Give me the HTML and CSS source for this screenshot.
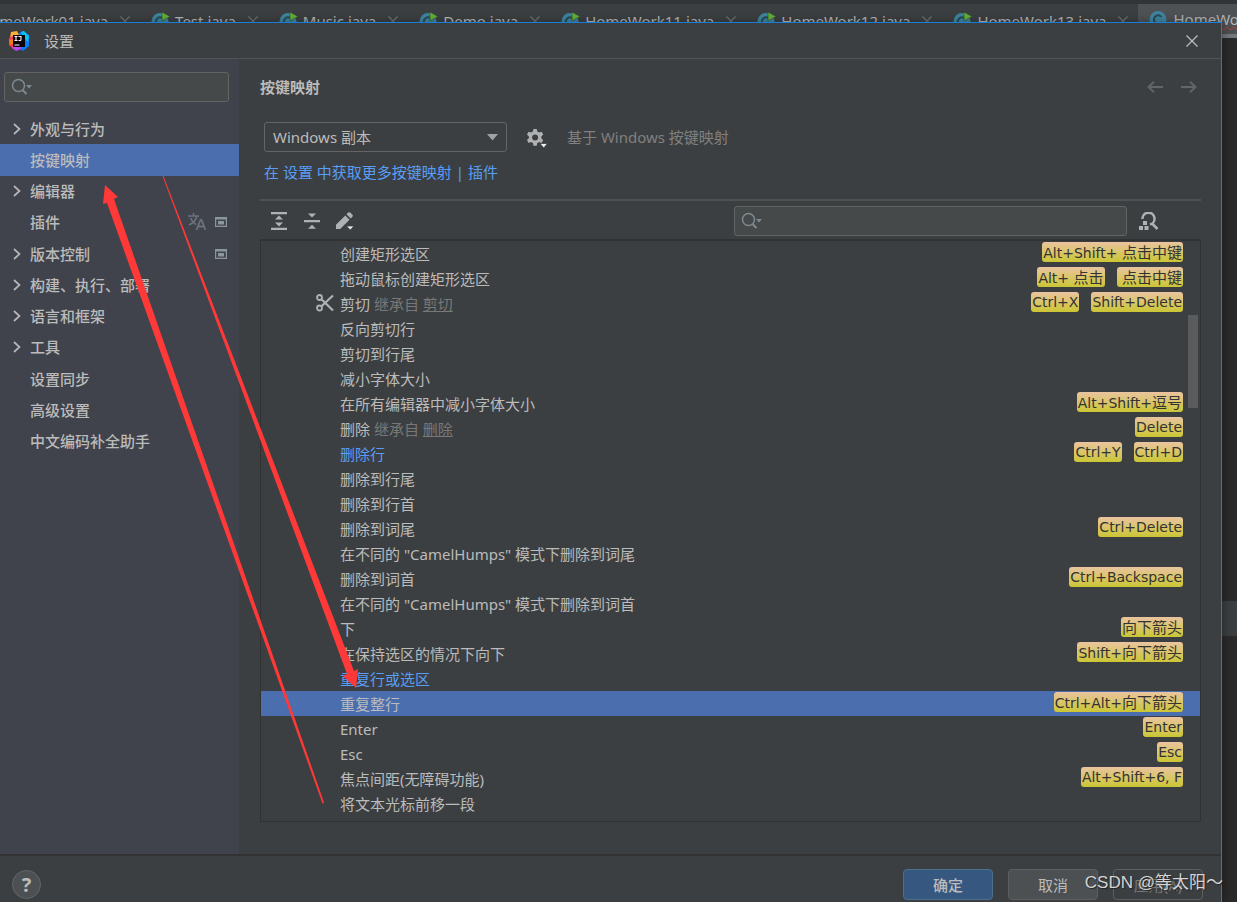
FILE: index.html
```html
<!DOCTYPE html>
<html lang="zh-CN">
<head>
<meta charset="utf-8">
<title>设置</title>
<link rel="stylesheet" href="styles.css">
</head>
<body>
<svg class="defs" aria-hidden="true">
  <symbol id="i-class" viewBox="0 0 20 18"><circle cx="9" cy="9.500" r="8.500" fill="#3e86a0"/><path d="M12.500 7A4.200 4.200 0 1 0 12.500 12" fill="none" stroke="#2b4a56" stroke-width="2"/></symbol>
  <symbol id="i-run" viewBox="0 0 20 18"><use href="#i-class"/><path d="M11 0v9l8-4.500z" fill="#5fb336" stroke="#3c3f41" stroke-width=".6"/></symbol>
  <symbol id="i-x" viewBox="0 0 10 10"><path d="M.5.5l9 9M9.500.5l-9 9" stroke="#6e7072" stroke-width="1.200"/></symbol>
  <symbol id="i-search" viewBox="0 0 22 18"><circle cx="7.500" cy="7.500" r="6" fill="none" stroke="#7d8a91" stroke-width="1.500"/><path d="M11.500 12l4 4" stroke="#7d8a91" stroke-width="2"/><path d="M15 7h6l-3 3.500z" fill="#7d8a91"/></symbol>
  <symbol id="i-chev" viewBox="0 0 8 12"><path d="M1 1l5.500 5L1 11" fill="none" stroke="#b4b7ba" stroke-width="1.700"/></symbol>
  <symbol id="i-proj" viewBox="0 0 12 10"><path d="M0 0h12v10H0zM1.200 2.500v6.300h9.600V2.500z" fill="#8a969e" fill-rule="evenodd"/><path d="M3 4h6v3.500H3z" fill="#8a969e"/></symbol>
</svg>

<div class="ide">
  <div class="tabs">
    <div class="tab"><svg class="cls"><use href="#i-run"/></svg>HomeWork01.java<svg class="tx"><use href="#i-x"/></svg></div>
    <div class="tab"><svg class="cls"><use href="#i-run"/></svg>Test.java<svg class="tx"><use href="#i-x"/></svg></div>
    <div class="tab"><svg class="cls"><use href="#i-run"/></svg>Music.java<svg class="tx"><use href="#i-x"/></svg></div>
    <div class="tab"><svg class="cls"><use href="#i-run"/></svg>Demo.java<svg class="tx"><use href="#i-x"/></svg></div>
    <div class="tab"><svg class="cls"><use href="#i-run"/></svg>HomeWork11.java<svg class="tx"><use href="#i-x"/></svg></div>
    <div class="tab"><svg class="cls"><use href="#i-run"/></svg>HomeWork12.java<svg class="tx"><use href="#i-x"/></svg></div>
    <div class="tab"><svg class="cls"><use href="#i-run"/></svg>HomeWork13.java<svg class="tx"><use href="#i-x"/></svg></div>
    <div class="tab current"><svg class="cls"><use href="#i-class"/></svg><span class="err">HomeWork14.java</span></div>
  </div>
  <div class="editor"><div class="pane"></div><div class="band"></div></div>
</div>

<main class="dialog">
  <header class="titlebar">
    <svg class="logo" viewBox="0 0 20 20"><path d="M2 1l6-1 3 6-6 5-5 2 1-6z" fill="#fdb13b"/><path d="M0 7l6-3 2 9-3 6-5-5z" fill="#fe315d"/><path d="M0 9l4-1v5l-3 1z" fill="#f97a12"/><path d="M10 2l4-2 6 4v11l-6 5-5-3z" fill="#087cfa"/><path d="M12 1l3-1 5 5-1 6-5-5z" fill="#07c3f2"/><path d="M3 16l9-2v4l-5 2z" fill="#b74af7"/><path d="M4 4h12v12H4z" fill="#0b0208"/><path d="M5.500 5.500h3M7 5.500v4M5.500 9.500h3M9.500 5.500h2.500v3q0 1-1 1H9.500M5.500 14h5" fill="none" stroke="#fff" stroke-width="1.100"/></svg>
    <h1>设置</h1>
    <button class="close" aria-label="关闭"><svg viewBox="0 0 12 12"><path d="M.5.5l11 11M11.500.5l-11 11" stroke="#b8babc" stroke-width="1.300"/></svg></button>
  </header>

  <div class="body">
    <aside class="side">
      <label class="search"><svg><use href="#i-search"/></svg><input type="text" aria-label="搜索设置"></label>
      <nav class="nav">
        <a href="#"><svg class="chev"><use href="#i-chev"/></svg><span>外观与行为</span></a>
        <a href="#" class="on"><i class="chev"></i><span>按键映射</span></a>
        <a href="#"><svg class="chev"><use href="#i-chev"/></svg><span>编辑器</span></a>
        <a href="#"><i class="chev"></i><span>插件</span>
          <svg class="lang" viewBox="0 0 18 18"><path d="M0 3h11M5.500 0v3M9 3Q7.500 9 1 12M2.500 5Q4 9 8 11.500" fill="none" stroke="#6a727b" stroke-width="1.600"/><path d="M8.500 17l4-10h1l4 10M10 13.500h6" fill="none" stroke="#6a727b" stroke-width="1.800"/></svg>
          <svg class="proj"><use href="#i-proj"/></svg></a>
        <a href="#"><svg class="chev"><use href="#i-chev"/></svg><span>版本控制</span><svg class="proj"><use href="#i-proj"/></svg></a>
        <a href="#"><svg class="chev"><use href="#i-chev"/></svg><span>构建、执行、部署</span></a>
        <a href="#"><svg class="chev"><use href="#i-chev"/></svg><span>语言和框架</span></a>
        <a href="#"><svg class="chev"><use href="#i-chev"/></svg><span>工具</span></a>
        <a href="#"><i class="chev"></i><span>设置同步</span></a>
        <a href="#"><i class="chev"></i><span>高级设置</span></a>
        <a href="#"><i class="chev"></i><span>中文编码补全助手</span></a>
      </nav>
    </aside>

    <section class="content">
      <div class="head">
        <h2>按键映射</h2>
        <button aria-label="后退"><svg viewBox="0 0 16 12"><path d="M16 6H1.500M7 .7L1.500 6 7 11.300" fill="none" stroke="#626466" stroke-width="1.900"/></svg></button>
        <button aria-label="前进"><svg viewBox="0 0 16 12"><path d="M0 6h14.500M9 .7L14.500 6 9 11.300" fill="none" stroke="#626466" stroke-width="1.900"/></svg></button>
      </div>
      <div class="scheme">
        <div class="combo"><select aria-label="按键映射方案"><option>Windows 副本</option></select><svg viewBox="0 0 11 7"><path d="M0 0h11L5.500 6.500z" fill="#9fa1a3"/></svg></div>
        <button class="gear" aria-label="方案操作"><svg viewBox="0 0 21 20"><path fill="#afb1b3" fill-rule="evenodd" d="M6.500 0h3.200l.6 2.600 1.800 1 2.500-.8 1.600 2.800-1.900 1.800v1.900l1.900 1.800-1.600 2.800-2.500-.8-1.800 1-.6 2.600H6.500l-.6-2.600-1.800-1-2.500.8L0 11.100l1.900-1.800V7.400L0 5.600l1.600-2.800 2.500.8 1.800-1zM8.100 5.400a3 3 0 1 0 0 6 3 3 0 0 0 0-6z"/><path d="M13 14.500h7.500L16.700 19z" fill="#eee" stroke="#3c3f41" stroke-width=".8"/></svg></button>
        <span class="based">基于 Windows 按键映射</span>
      </div>
      <p class="more"><a href="#">在 设置 中获取更多按键映射</a> | <a href="#">插件</a></p>

      <div class="tools">
        <button aria-label="全部展开"><svg viewBox="0 0 18 18"><path d="M1 0h16v2.300H1zM1 15.700h16V18H1zM9 3.500l4 4H5zM9 14.500l4-4H5z" fill="#afb1b3"/></svg></button>
        <button aria-label="全部折叠"><svg viewBox="0 0 18 18"><path d="M1 8h16v2.200H1zM9 5.500l4-4H5zM9 12.700l4 4H5z" fill="#afb1b3"/></svg></button>
        <button aria-label="编辑快捷键"><svg viewBox="0 0 18 18"><path d="M0 17v-4.200L9.300 3.500l4.200 4.200L4.200 17zM10.500 2.300L12.200.6q1-.9 2 0l2.200 2.200q.9 1 0 2l-1.700 1.700z" fill="#afb1b3"/><path d="M10.500 14h7.500l-3.700 4z" fill="#eee" stroke="#3c3f41" stroke-width=".8"/></svg></button>
        <label class="search"><svg><use href="#i-search"/></svg><input type="text" aria-label="搜索操作"></label>
        <button aria-label="按快捷键查找"><svg viewBox="0 0 20 18"><path d="M3.500 7a6 6 0 1 1 7.500 5.500M12.500 11l6 6" fill="none" stroke="#afb1b3" stroke-width="2.500"/><path d="M4 9h4v4H4zM0 14h4v4H0zM5.500 14h4v4h-4z" fill="#afb1b3"/></svg></button>
      </div>

      <ul class="list">
        <li><span>创建矩形选区</span><kbd>Alt+Shift+ <b>点击中键</b></kbd></li>
        <li><span>拖动鼠标创建矩形选区</span><kbd>Alt+ <b>点击</b></kbd><kbd>&nbsp;<b>点击中键</b></kbd></li>
        <li><svg class="cut" viewBox="0 0 18 18"><g fill="none" stroke="#afb1b3" stroke-width="1.800"><circle cx="3.500" cy="3.500" r="2.500"/><circle cx="3.500" cy="14" r="2.500"/><path d="M5.500 5.200L17 16.500M5.500 12.300L17 1.500" stroke-width="2.200"/></g></svg><span>剪切 <small>继承自 <u>剪切</u></small></span><kbd>Ctrl+X</kbd><kbd>Shift+Delete</kbd></li>
        <li><span>反向剪切行</span></li>
        <li><span>剪切到行尾</span></li>
        <li><span>减小字体大小</span></li>
        <li><span>在所有编辑器中减小字体大小</span><kbd>Alt+Shift+<b>逗号</b></kbd></li>
        <li><span>删除 <small>继承自 <u>删除</u></small></span><kbd>Delete</kbd></li>
        <li class="mod"><span>删除行</span><kbd>Ctrl+Y</kbd><kbd>Ctrl+D</kbd></li>
        <li><span>删除到行尾</span></li>
        <li><span>删除到行首</span></li>
        <li><span>删除到词尾</span><kbd>Ctrl+Delete</kbd></li>
        <li><span>在不同的 "CamelHumps" 模式下删除到词尾</span></li>
        <li><span>删除到词首</span><kbd>Ctrl+Backspace</kbd></li>
        <li><span>在不同的 "CamelHumps" 模式下删除到词首</span></li>
        <li><span>下</span><kbd><b>向下箭头</b></kbd></li>
        <li><span>在保持选区的情况下向下</span><kbd>Shift+<b>向下箭头</b></kbd></li>
        <li class="mod"><span>重复行或选区</span></li>
        <li class="on"><span>重复整行</span><kbd>Ctrl+Alt+<b>向下箭头</b></kbd></li>
        <li><span>Enter</span><kbd>Enter</kbd></li>
        <li><span>Esc</span><kbd>Esc</kbd></li>
        <li><span>焦点间距(无障碍功能)</span><kbd>Alt+Shift+6, F</kbd></li>
        <li><span>将文本光标前移一段</span></li>
      </ul>
    </section>
  </div>

  <footer class="foot">
    <button class="help" aria-label="帮助">?</button>
    <button class="btn primary">确定</button>
    <button class="btn">取消</button>
    <button class="btn" disabled>应用(A)</button>
  </footer>
</main>

<svg class="arrows" width="1237" height="902" viewBox="0 0 1237 902" aria-hidden="true">
  <path d="M162.500 176L347 674l-4 2 13 12 2-19-4 2L163.500 176z" fill="#ff3838"/>
  <path d="M322.500 803.500L107 203l-4 1 2-19 13 12-4 2 210 603.500z" fill="#ff3838"/>
</svg>
<div class="mark">CSDN @等太阳～</div>
</body>
</html>
```
FILE: styles.css
```css
* { box-sizing: border-box; }
body {
  margin: 0;
  height: 100vh;
  overflow: hidden;
  position: relative;
  background: #2b2b2b;
  color: #bbbbbb;
  font: 15px/20px "Noto Sans", "Noto Sans CJK SC", sans-serif;
}
.defs { position: absolute; width: 0; height: 0; }
svg { display: block; flex: none; }
button { background: none; border: 0; padding: 0; color: inherit; font: inherit; }
a { color: inherit; text-decoration: none; }

.ide { height: 100%; display: flex; flex-direction: column; overflow: hidden; }
.tabs {
  display: flex;
  margin-left: -56px;
  background: #3c3f41;
  border-top: 4px solid #323436;
  height: 38px;
  flex: none;
}
.tab { display: flex; align-items: center; flex: none; padding: 0 10px 0 11px; height: 34px; white-space: nowrap; color: #b4b6b8; }
.cls { width: 20px; height: 18px; margin-right: 4px; }
.tx { width: 10px; height: 10px; margin-left: 12px; }
.tab.current { background: #4e5254; border-bottom: 4px solid #747a80; }
.err { text-decoration: underline wavy #bc3f3c 1px; }
.editor { flex: 1; display: flex; flex-direction: column; }
.pane { height: 563px; }
.band { height: 35px; background: #3c3f41; }

.dialog {
  position: absolute;
  inset: 22px 15px 0 0;
  display: flex;
  flex-direction: column;
  background: #3c3f41;
  border-top: 1px solid #1a7fd4;
  border-right: 1px solid #1a7fd4;
  box-shadow: 2px 0 10px #00000055;
}
.titlebar { display: flex; align-items: center; height: 36px; flex: none; padding: 0 23px 0 9px; border-bottom: 1px solid #515355; }
.logo { width: 20px; height: 20px; margin-right: 15px; }
h1, h2 { margin: 0; font-size: 15px; flex: 1; }
h1 { font-weight: 400; }
h2 { font-weight: 700; }
.close svg { width: 12px; height: 12px; }

.body { flex: 1; display: flex; min-height: 0; }
.side { width: 239px; flex: none; background: #40434c; padding-top: 13px; }
.search {
  display: flex;
  align-items: center;
  height: 30px;
  padding: 0 6px;
  background: #45494a;
  border: 1px solid #646464;
  border-radius: 3px;
}
.search svg { width: 22px; height: 18px; }
.search input { flex: 1; min-width: 0; background: none; border: 0; outline: 0; color: inherit; font: inherit; }
.side .search { margin: 0 10px 0 4px; }
.nav { display: flex; flex-direction: column; height: 344px; margin-top: 11px; font-weight: 500; }
.nav a { flex: 1; display: flex; align-items: center; padding: 0 12px 0 13px; }
.nav span { flex: 1; }
.nav .on { background: #4b6eaf; }
.chev { width: 8px; height: 12px; margin-right: 9px; }
.lang { width: 18px; height: 18px; margin-right: 9px; }
.proj { width: 12px; height: 10px; }

.content { flex: 1; min-width: 0; display: flex; flex-direction: column; padding: 17px 20px 32px 21px; }
.head { display: flex; align-items: center; gap: 18px; height: 22px; padding-right: 4px; }
.head svg { width: 16px; height: 12px; }
.scheme { display: flex; align-items: center; margin-top: 24px; padding-left: 4px; }
.combo { position: relative; width: 243px; }
.combo select {
  appearance: none;
  width: 100%;
  height: 30px;
  padding: 0 8px;
  background: #3c3f41;
  border: 1px solid #646464;
  border-radius: 3px;
  color: inherit;
  font: inherit;
}
.combo svg { position: absolute; right: 9px; top: 12px; width: 11px; height: 7px; }
.gear { margin: 3px 19px 0 20px; }
.gear svg { width: 21px; height: 20px; }
.based { color: #808080; }
.more { margin: 9px 0 16px 4px; line-height: 22px; color: #589df6; }

.tools { display: flex; align-items: center; gap: 15px; height: 42px; padding: 0 42px 0 10px; border-top: 2px solid #515151; }
.tools svg { width: 18px; height: 18px; }
.tools .search { width: 393px; margin-left: auto; }
.tools .search svg { width: 22px; }
.tools .search + button { margin-left: -3px; }
.tools .search + button svg { width: 20px; }

.list { position: relative; list-style: none; margin: 0; padding: 0; flex: 1; border: 1px solid #323232; border-top-width: 2px; margin-top: -2px; }
.list::after { content: ""; position: absolute; right: 2px; top: 74px; width: 10px; height: 93px; background: #595b5d; }
.list li { display: flex; height: 25px; padding: 0 17px 0 79px; gap: 12px; }
.list li span { flex: 1; line-height: 26px; }
.list small { font-size: 15px; color: #787878; }
.list .mod { color: #589df6; }
.list .on { background: #4b6eaf; }
.list .cut { width: 18px; height: 18px; margin: 3px -6px 0 -24px; }
kbd {
  height: 20px;
  margin-top: 1px;
  padding: 0 1px;
  border-radius: 3px;
  background: linear-gradient(#eac4a0, #cbc634);
  color: #333;
  font: 14px/20px "DejaVu Sans", sans-serif;
}
kbd b { font: 15px/20px "Noto Sans CJK SC", sans-serif; }

.foot { display: flex; gap: 15px; flex: none; padding: 13px 18px 2px 12px; border-top: 2px solid #323232; }
.help { width: 29px; height: 29px; margin: 1px auto 0 0; border: 1px solid #646769; border-radius: 50%; background: #4c5052; font-size: 20px; font-weight: 700; line-height: 26px; }
.btn { width: 90px; height: 31px; border: 1px solid #5e6060; border-radius: 4px; background: #4c5052; }
.btn.primary { background: #365880; border-color: #4c708c; font-weight: 500; }
.btn:disabled { background: none; color: #777; }

.arrows { position: absolute; left: 0; top: 0; pointer-events: none; }
.mark { position: absolute; right: 14px; bottom: 6px; font: 17px/26px "Liberation Sans", "Noto Sans CJK SC", sans-serif; color: #d4d4d4; text-shadow: 1px 1px 1px #222; white-space: nowrap; }
```
